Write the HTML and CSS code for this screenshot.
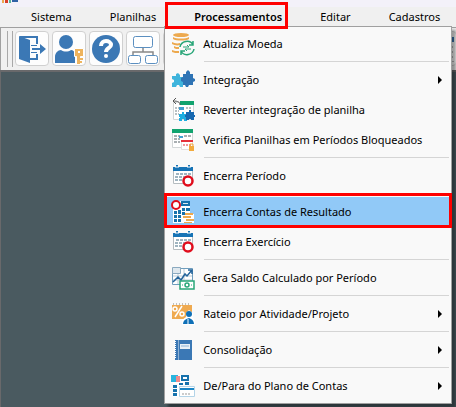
FILE: index.html
```html
<!DOCTYPE html>
<html lang="pt-BR">

<head>
    <meta charset="UTF-8">
    <meta name="viewport" content="width=device-width, initial-scale=1.0">
    <title>Processamentos</title>
    <link rel="stylesheet" href="styles.css">
</head>

<body>
    <!-- shared menu icons -->
    <svg class="defs" width="0" height="0">
        <symbol id="puzzle" viewBox="0 0 24 24">
            <path fill="#3fb4dc" d="M1 8h4V6l2-1 2 2v2h3v3l2 1v2l-2 1v3H9l-1-2H6l-1 2H1v-4l2-1v-2l-2-1z"/>
            <path fill="#2f74b5" d="M12 6h3V4l2-2 2 2v2h3v4l2 1v2l-2 1v3h-4l-1 2h-2l-1-2h-2v-3l-2-1v-3l2-1z"/>
        </symbol>
        <symbol id="calendar-stop" viewBox="0 0 24 24">
            <path fill="#fff" stroke="#b5bcc0" d="M2.500 4.500h19v15h-19z"/>
            <path fill="#1673b5" d="M2 3h20v4H2z"/>
            <path stroke="#1673b5" stroke-width="2" d="M6 1v3M18 1v3"/>
            <path stroke="#fff" d="M4 3h4M16 3h4"/>
            <path stroke="#9fb4c0" stroke-width="2" stroke-dasharray="3 1" d="M5 10h15M4 13h16M4 16h14"/>
            <circle cx="17" cy="17" r="4.500" fill="#fff" stroke="#e00d1c" stroke-width="2.500"/>
        </symbol>
    </svg>

    <div class="titlebar">
        <svg width="18" height="3" viewBox="0 0 18 3">
            <path fill="#eda94e" d="M2 0h2v3H2z"/>
            <path fill="#d8402a" d="M5 0h3v3H5z"/>
            <path fill="#58b49b" d="M9 0h2v3H9z"/>
            <path fill="#2f62a5" d="M12 0h6v2h-6z"/>
        </svg>
    </div>

    <nav class="menubar">
        <a href="#">Sistema</a>
        <a href="#">Planilhas</a>
        <div class="open">
            <a href="#">Processamentos</a>
            <ul class="menu">
                <li><a href="#">
                    <svg viewBox="0 0 24 24">
                        <g fill="#eda94e">
                            <ellipse cx="10" cy="3" rx="8" ry="2"/>
                            <path d="M2 5c3 2 13 2 16 0v2c-3 2-13 2-16 0zM1 10c2 1 5 2 8 1v2c-3 1-6 0-8-1zM3 14c1 1 3 1 5 1v2c-2 0-4 0-5-1zM1 18c2 1 4 1 7 1v2c-3 0-5 0-7-1z"/>
                        </g>
                        <circle cx="16" cy="16" r="7" fill="#f9f9f9"/>
                        <path fill="none" stroke="#27a577" stroke-width="1.500" d="M9 15c1-6 10-8 13-2M22 9v4h-4M23 17c-1 6-10 8-13 2M10 23v-4h4"/>
                        <path fill="none" stroke="#27a577" d="M12 15h6l-2-2M20 17h-6l2 2"/>
                    </svg>Atualiza Moeda</a></li>
                <li class="separator"></li>
                <li class="submenu"><a href="#"><svg><use href="#puzzle"/></svg>Integração</a></li>
                <li><a href="#">
                    <svg viewBox="0 0 24 24">
                        <path fill="#fff" stroke="#d3d7d8" d="M2.500 4.500h20v17h-20z"/>
                        <path fill="#11a36f" d="M9 3h14v4H9z"/>
                        <path fill="none" stroke="#555" d="M9 7C9 4 7 3 2 3M5 0L2 3l3 3"/>
                        <path stroke="#b9bfc2" stroke-width="2" stroke-dasharray="2 1" d="M4 10h4M4 13h4M4 16h4M15 10h6"/>
                        <path fill="#3f9fd0" d="M8 9h5v3H8z"/>
                        <path fill="#1cade0" d="M8 16h3v-2h2v2h3v7h-3v-2h-2v2H8v-3h1v-1H8z"/>
                        <path fill="#1768b0" d="M15 14h3v-2h2v2h3v3h1v2h-1v3h-3v-1h-2v1h-3v-3h-1v-2h1z"/>
                    </svg>Reverter integração de planilha</a></li>
                <li><a href="#">
                    <svg viewBox="0 0 24 24">
                        <path fill="#fff" stroke="#d3d7d8" d="M1.500 3.500h20v16h-20z"/>
                        <path fill="#11a36f" d="M1 1h21v4H1z"/>
                        <path stroke="#a9afb2" stroke-width="2" stroke-dasharray="3 1" d="M3 8h6M3 11h6M3 14h6M13 8h8"/>
                        <path fill="#3f9fd0" d="M8 8h4v2H8z"/>
                        <path fill="#fff" stroke="#e2dede" d="M10.500 12.500h11v9h-11z"/>
                        <path fill="#e6303a" d="M10 12h12v2H10z"/>
                        <path stroke="#e6303a" stroke-dasharray="2 1" d="M12 17h8"/>
                        <path fill="#f2aa3c" d="M18 18h5v5h-5z"/>
                        <path fill="none" stroke="#f2aa3c" d="M19 18v-2h3v2"/>
                    </svg>Verifica Planilhas em Períodos Bloqueados</a></li>
                <li class="separator"></li>
                <li><a href="#"><svg><use href="#calendar-stop"/></svg>Encerra Período</a></li>
                <li class="separator"></li>
                <li class="selected"><a href="#">
                    <svg viewBox="0 0 24 24">
                        <path fill="#fff" d="M2 1h17v13h4v9H2z"/>
                        <path fill="#1672ad" d="M10 1h9v5h-9zM3 11h3v3H3zM7 10h3v4H7zM11 8h3v3h-3zM15 8h4v3h-4zM3 15h3v3H3zM7 15h3v3H7zM3 19h3v3H3zM7 19h3v3H7zM11 12h3v3h-3z"/>
                        <path fill="#dce9f1" d="M12 3h5v1h-5z"/>
                        <path fill="#eda94e" d="M14 13h8v2h-8zM12 16h8v2h-8zM15 19h8v2h-8zM13 22h8v1h-8z"/>
                        <circle cx="5" cy="5" r="4" fill="#fff" stroke="#e00d1c" stroke-width="2"/>
                    </svg>Encerra Contas de Resultado</a></li>
                <li><a href="#"><svg><use href="#calendar-stop"/></svg>Encerra Exercício</a></li>
                <li class="separator"></li>
                <li><a href="#">
                    <svg viewBox="0 0 24 24">
                        <path fill="#fff" stroke="#6f9dbd" d="M1.500 2.500h20v16h-20z"/>
                        <path fill="#dfe8ee" stroke="#8ba9bf" d="M1.500 1.500h8v6h-8z"/>
                        <path stroke="#b9cbd7" d="M2 10h19M2 14h19M7 8v10M13 3v15"/>
                        <path fill="none" stroke="#24649b" stroke-width="1.500" d="M2 16l5-5 3 3 4-6 2 2 5-6M17 4h4v4"/>
                        <path fill="#fff" stroke="#28a778" stroke-width="1.500" d="M9 15h14v8H9z"/>
                        <circle cx="16" cy="19" r="2" fill="none" stroke="#28a778" stroke-width="1.500"/>
                        <path stroke="#28a778" d="M11 19h1M20 19h1"/>
                    </svg>Gera Saldo Calculado por Período</a></li>
                <li class="separator"></li>
                <li class="submenu"><a href="#">
                    <svg viewBox="0 0 24 24">
                        <path fill="#efaa50" d="M1 3h20v14H1z"/>
                        <path stroke="#8d8678" stroke-dasharray="1 2" d="M2 2h18"/>
                        <g fill="none" stroke="#fff" stroke-width="1.500">
                            <circle cx="4" cy="7" r="2"/>
                            <circle cx="11" cy="12" r="2"/>
                            <path d="M11 4L4 15"/>
                        </g>
                        <path fill="#fff" d="M11 23v-5l4-3v-4l3-3 4 3v5l2 3v4z"/>
                        <circle cx="18" cy="12" r="3" fill="#0f70b7"/>
                        <path fill="#0f70b7" d="M12 22c0-3 2-5 6-6 3 1 5 3 5 6z"/>
                        <path stroke="#fff" d="M17 17v5"/>
                    </svg>Rateio por Atividade/Projeto</a></li>
                <li class="separator"></li>
                <li class="submenu"><a href="#">
                    <svg viewBox="0 0 24 24">
                        <path fill="#3b78b5" d="M4 2h17v20H4z"/>
                        <path stroke="#8eb2d6" d="M7.500 2v20"/>
                        <path stroke="#fff" stroke-width="2" stroke-dasharray="1 1" d="M4 3v18"/>
                        <path fill="#e8f0f7" d="M9 6h10v5H9z"/>
                        <path stroke="#8eb2d6" d="M10 8h8"/>
                    </svg>Consolidação</a></li>
                <li class="separator"></li>
                <li class="submenu"><a href="#">
                    <svg viewBox="0 0 24 24">
                        <path fill="#fff" d="M0 1h18v11h6v11H2V9H0z"/>
                        <path fill="#29b5df" d="M0 1h7v7H0z"/>
                        <path fill="#ef8b8b" d="M5 2h4v6H5z"/>
                        <path fill="#1672ad" d="M10 1h8v6h-8zM2 11h4v3H2zM2 15h4v3H2zM2 19h4v3H2zM8 9h4v2H8zM14 8h4v3h-4z"/>
                        <path fill="#fff" d="M12 3h4v2h-4z"/>
                        <path fill="#fff" stroke="#b3d4e8" d="M8.500 12.500h15v10h-15z"/>
                        <path fill="#1b86c6" d="M9 14h14v2H9z"/>
                        <path stroke="#999" stroke-dasharray="2 1" d="M11 20h9"/>
                    </svg>De/Para do Plano de Contas</a></li>
            </ul>
        </div>
        <a href="#">Editar</a>
        <a href="#">Cadastros</a>
    </nav>

    <div class="toolbar">
        <button aria-label="Sair">
            <svg viewBox="0 0 30 30">
                <path fill="#3b78b5" d="M2 2l11 4v23L2 25z"/>
                <path fill="none" stroke="#3b78b5" stroke-width="2" d="M3 3h17v7M20 20v5h-7"/>
                <path fill="none" stroke="#3b78b5" d="M14 11.500h6M14 18.500h6"/>
                <path fill="#3b78b5" d="M15 14h8v-4l6 5-6 5v-4h-8z"/>
            </svg>
        </button>
        <button aria-label="Usuários">
            <svg viewBox="0 0 30 30">
                <circle cx="12" cy="8" r="7" fill="#3b78b5"/>
                <path fill="#3b78b5" d="M1 29v-6c0-4 3-7 6-7 3 2 7 2 10 0 2 0 4 2 4 4v9z"/>
                <path fill="#eeb45d" stroke="#fff" d="M20.500 14.500h9v8h-3v8h-4v-8h-2z"/>
                <path fill="#fff" d="M24 17h2v2h-2z"/>
                <path fill="#eeb45d" d="M25 24h4v2h-4zM25 27h3v2h-3z"/>
            </svg>
        </button>
        <button aria-label="Ajuda">
            <svg viewBox="0 0 30 30">
                <circle cx="15" cy="15" r="14" fill="#3b78b5"/>
                <path fill="none" stroke="#fff" stroke-width="4" d="M10 12c0-7 10-6 10-1 0 3-5 3-5 7"/>
                <circle cx="15" cy="22" r="2" fill="#fff"/>
            </svg>
        </button>
        <button aria-label="Estrutura">
            <svg viewBox="0 0 30 30">
                <path fill="none" stroke="#888" stroke-width="1.500" d="M15 13v5M5 22v-4h20v4"/>
                <g fill="#fff" stroke="#5b8fc0">
                    <rect x="5.500" y="2.500" width="19" height="11" rx="2"/>
                    <rect x="0.500" y="21.500" width="12" height="8" rx="2"/>
                    <rect x="17.500" y="21.500" width="12" height="8" rx="2"/>
                </g>
            </svg>
        </button>
        <button aria-label="Planilha"></button>
        <button class="last" aria-label="Calendário">
            <svg viewBox="0 0 30 30">
                <path fill="#fff" stroke="#bbb" d="M1.500 3.500h29v24h-29z"/>
                <path fill="#3b78b5" d="M1 3h29v5H1z"/>
                <path stroke="#bbb" stroke-width="2" stroke-dasharray="3 1" d="M3 13h26M3 18h26M3 23h26"/>
            </svg>
        </button>
    </div>

    <main class="workspace"></main>
</body>

</html>
```
FILE: styles.css
```css
* {
    box-sizing: border-box;
}

body {
    margin: 0;
    min-height: 100vh;
    display: flex;
    flex-direction: column;
    overflow: hidden;
    font-family: 'Noto Sans', 'Open Sans', sans-serif;
    font-size: 11px;
    line-height: 20px;
    color: #000;
    background-color: #f0f0f0;
}

a {
    color: inherit;
    text-decoration: none;
}

.defs {
    position: absolute;
}

.titlebar {
    height: 7px;
    background-color: #f3f1f9;
}

.titlebar svg {
    display: block;
}

.menubar {
    display: flex;
    gap: 38px;
    height: 20px;
    padding-left: 31px;
}

.open {
    position: relative;
}

.open > a {
    font-weight: 600;
}

/* red frame around the open menu title */
.open::after {
    content: "";
    position: absolute;
    top: -5px;
    bottom: -2px;
    left: -29px;
    right: -6px;
    border: 3px solid #fe0000;
    z-index: 2;
    pointer-events: none;
}

.menu {
    position: absolute;
    top: 19px;
    left: -30px;
    z-index: 1;
    width: 288px;
    margin: 0;
    padding: 2px;
    list-style: none;
    background-color: #f9f9f9;
    border: 1px solid #a0a0a0;
    box-shadow: 4px 4px 3px rgba(0, 0, 0, 0.4);
}

.menu a {
    display: flex;
    align-items: center;
    gap: 8px;
    height: 30px;
    padding-left: 4px;
    white-space: nowrap;
}

.menu a svg {
    width: 24px;
    height: 24px;
}

.separator {
    height: 6px;
    margin-left: 37px;
    padding-top: 2px;
}

.separator::before {
    content: "";
    display: block;
    height: 1px;
    background-color: #d5d5d5;
}

.submenu a::after {
    content: "";
    margin-left: auto;
    margin-right: 7px;
    border: 4px solid transparent;
    border-left-color: #000;
    border-right: 0;
}

.selected {
    position: relative;
    background-color: #91c9f7;
}

.selected::after {
    content: "";
    position: absolute;
    top: -4px;
    bottom: -1px;
    left: -3px;
    right: -3px;
    border: 3px solid #fe0000;
    pointer-events: none;
}

.toolbar {
    display: flex;
    gap: 3px;
    height: 43px;
    padding: 3px 0 0 6px;
    border-top: 1px solid #a0a0a0;
    border-left: 1px solid #a0a0a0;
}

/* drag handle */
.toolbar::before {
    content: "";
    width: 4px;
    height: 36px;
    margin-right: -1px;
    border: 1px solid #a8a8a8;
    border-width: 0 1px;
}

.toolbar button {
    flex: none;
    width: 34px;
    height: 35px;
    padding: 1px;
    border: 1px solid #d0d0d0;
    border-radius: 4px;
    background-color: #fdfdfd;
}

.toolbar button svg {
    display: block;
    width: 30px;
    height: 30px;
}

.toolbar .last {
    margin-left: auto;
    border-right: 0;
}

.workspace {
    flex: 1;
    background-color: #4a5a60;
    border-top: 2px solid #69696b;
    border-left: 1px solid #69696b;
}
```
